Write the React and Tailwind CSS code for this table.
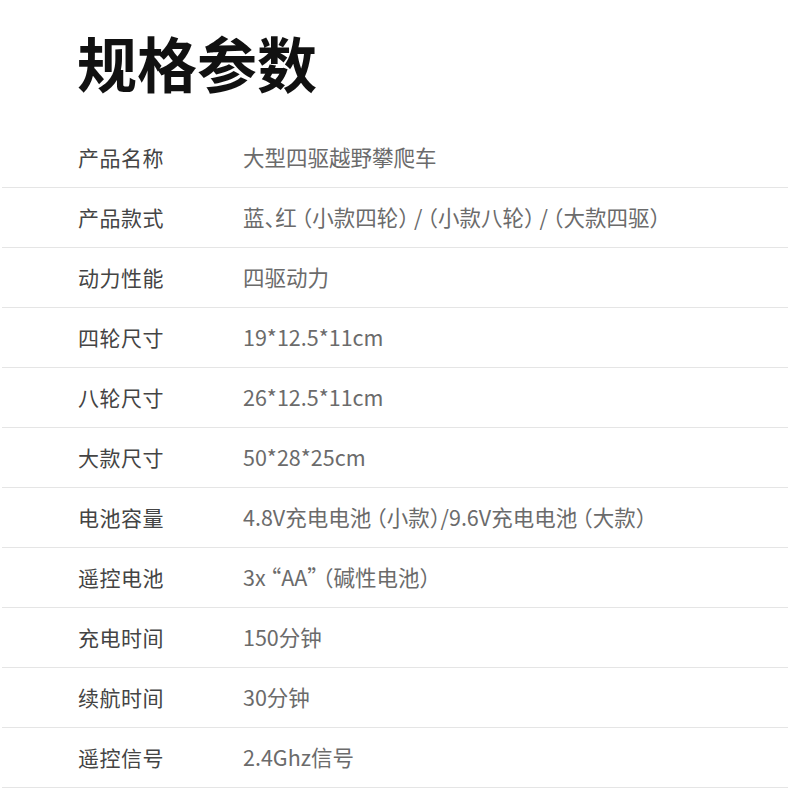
import React from "react";

const specs = [
  ["产品名称", "大型四驱越野攀爬车"],
  ["产品款式", "蓝、红 （小款四轮） / （小款八轮） / （大款四驱）"],
  ["动力性能", "四驱动力"],
  ["四轮尺寸", "19*12.5*11cm"],
  ["八轮尺寸", "26*12.5*11cm"],
  ["大款尺寸", "50*28*25cm"],
  ["电池容量", "4.8V充电电池 （小款）/9.6V充电电池 （大款）"],
  ["遥控电池", "3x “AA” （碱性电池）"],
  ["充电时间", "150分钟"],
  ["续航时间", "30分钟"],
  ["遥控信号", "2.4Ghz信号"],
];

function App() {
  return (
    <div className="w-[790px] min-h-[800px] bg-white font-['Noto_Sans_CJK_SC',sans-serif]">
      <div className="h-[128px] pl-[77px] pt-[22px]">
        <h1 className="text-[60px] leading-[80px] font-bold text-[#111]">
          规格参数
        </h1>
      </div>
      <div className="px-[2px]">
        {specs.map(([label, value]) => (
          <div
            key={label}
            className="flex items-center h-[60px] border-b border-[#e5e5e5]"
          >
            <div className="w-[241px] pl-[76px] text-[21px] text-[#444] tracking-[0.5px]">
              {label}
            </div>
            <div className="text-[21.5px] text-[#6b6b6b] [font-feature-settings:'halt']">
              {value}
            </div>
          </div>
        ))}
      </div>
    </div>
  );
}

export default App;
